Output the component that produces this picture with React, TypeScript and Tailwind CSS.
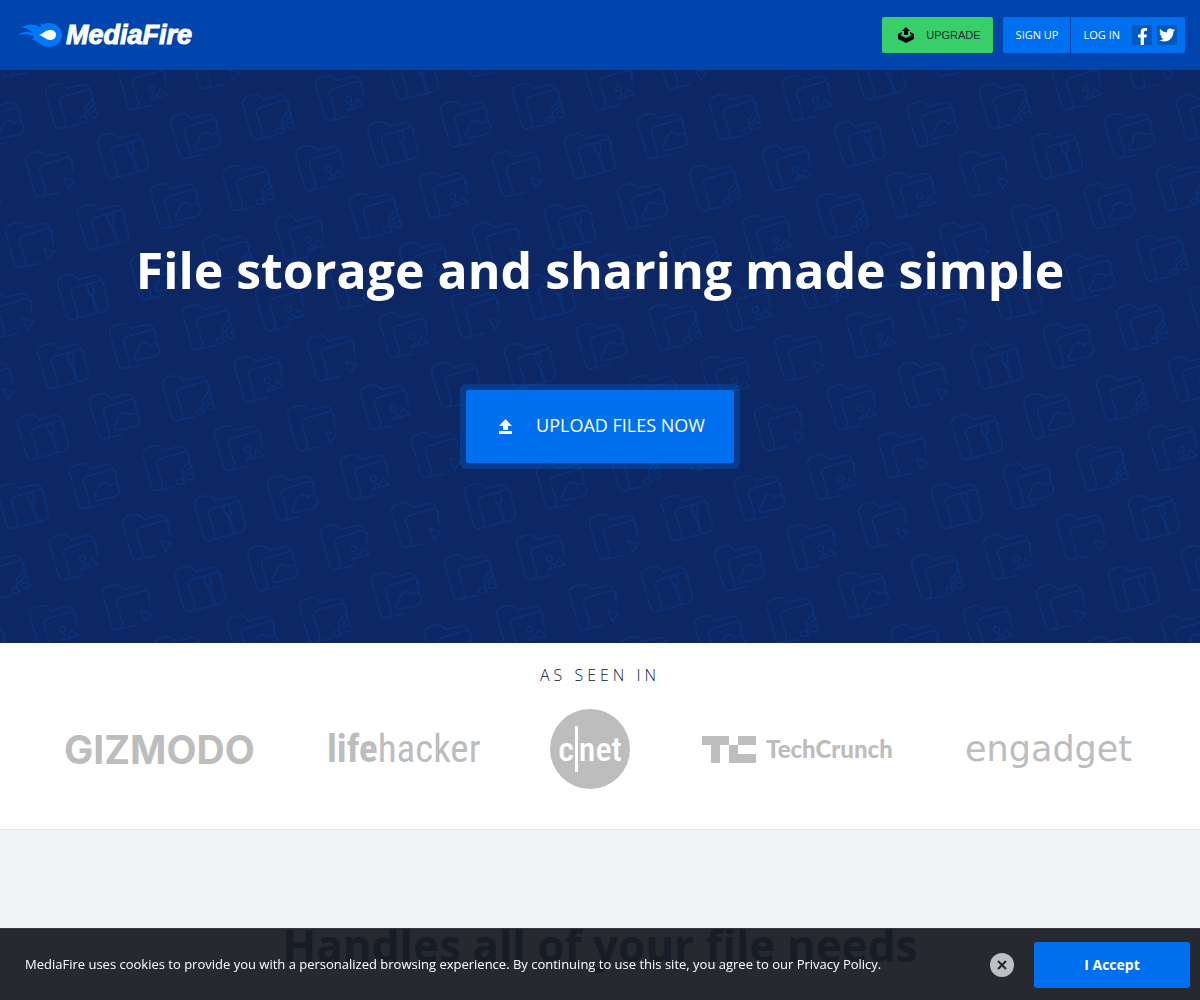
import { FaFacebookF, FaTwitter } from 'react-icons/fa'

type FolderKind = 'music' | 'image' | 'cloud' | 'zip' | 'play'

const TILE_WIDTH = 467
const TILE_HEIGHT = 640

const folders: [FolderKind, number, number][] = [
  ['cloud', 460, -39],
  ['play', 190, -27],
  ['zip', 387, -16],
  ['image', 118, -6],
  ['image', 315, 5],
  ['music', 45, 13],
  ['music', 242, 24],
  ['cloud', 440, 31],
  ['cloud', 170, 43],
  ['zip', 367, 51],
  ['zip', 97, 63],
  ['image', 295, 75],
  ['play', 25, 81],
  ['music', 222, 95],
  ['image', 419, 102],
  ['cloud', 150, 113],
  ['music', 349, 123],
  ['zip', 77, 134],
  ['image', 275, 145],
  ['play', 5, 152],
  ['music', 202, 165],
  ['image', 399, 172],
  ['cloud', 130, 184],
  ['music', 329, 193],
  ['zip', 57, 204],
  ['image', 255, 215],
  ['play', 451, 222],
  ['music', 182, 234],
  ['image', 379, 242],
  ['cloud', 109, 253],
  ['play', 307, 265],
  ['zip', 37, 273],
  ['image', 234, 286],
  ['play', 431, 292],
  ['music', 162, 305],
  ['image', 360, 314],
  ['cloud', 89, 323],
  ['play', 287, 335],
  ['zip', 17, 344],
  ['image', 214, 355],
  ['play', 411, 362],
  ['music', 142, 375],
  ['image', 340, 384],
  ['cloud', 69, 393],
  ['cloud', 267, 405],
  ['zip', 464, 413],
  ['zip', 194, 425],
  ['play', 391, 432],
  ['play', 122, 444],
  ['image', 320, 454],
  ['image', 49, 464],
  ['cloud', 247, 475],
  ['music', 444, 484],
  ['zip', 174, 496],
  ['cloud', 371, 502],
  ['play', 102, 514],
  ['music', 299, 527],
  ['image', 29, 535],
  ['cloud', 227, 545],
  ['music', 424, 554],
  ['zip', 154, 566],
]

const Folder = ({ kind }: { kind: FolderKind }) => (
  <>
    <path d="M47 15 L44 5 Q42 0 37 1 L21 5 L18 2 Q16 0 13 0 L5 2 Q0 4 0 9 L9 41 Q11 46 15 45 Q21 44 20 38 L14 18 Q14 14 18 13 L42 6 Q46 6 47 10" />
    {kind === 'zip' ? (
      <path d="M15 45 L46 37 Q51 35 51 31 L47 15" />
    ) : (
      <path d="M15 45 L33 41 M46 12 L48 21" />
    )}
    {kind === 'music' && (
      <>
        <ellipse cx="38" cy="36" rx="4" ry="3" />
        <ellipse cx="48" cy="31" rx="4" ry="3" />
        <path d="M41 35 L39 25 L47 15 L51 29 M40 30 L49 20" />
      </>
    )}
    {kind === 'image' && (
      <>
        <circle cx="33" cy="24" r="3" />
        <path d="M32 35 L36 29 L39 31 L42 24 L49 30 Z" />
      </>
    )}
    {kind === 'cloud' && (
      <path d="M27 37 Q24 36 25 33 Q26 29 28 29 Q28 21 34 19 Q39 19 41 22 Q46 17 50 24 Q51 31 45 33 Z" />
    )}
    {kind === 'zip' && (
      <path d="M29 11 L35 9 L37 18 L32 20 Z M33 21 L36 22 L34 24 L37 25 L35 27 L38 28 L36 30 L39 31 L37 33 L40 34 L38 36 L41 37" />
    )}
    {kind === 'play' && <path d="M38 26 L49 29 L43 37 Z" />}
  </>
)

const FolderPattern = () => (
  <svg className="absolute inset-0 h-full w-full" aria-hidden="true">
    <defs>
      <pattern id="folders" width={TILE_WIDTH} height={TILE_HEIGHT} patternUnits="userSpaceOnUse">
        <g fill="none" stroke="#0b3178" strokeWidth="1.4" strokeLinejoin="round" strokeLinecap="round">
          {/* second copy covers folders cut by the tile's edge */}
          {folders.map(([kind, x, y]) =>
            [x, x - TILE_WIDTH].map((left) => (
              <g key={`${left}-${y}`} transform={`translate(${left + 0.5} ${y + 0.5})`}>
                <Folder kind={kind} />
              </g>
            ))
          )}
        </g>
      </pattern>
    </defs>
    <rect width="100%" height="100%" fill="url(#folders)" />
  </svg>
)

const Flame = () => (
  <svg width="44" height="26" viewBox="0 0 44 26" aria-hidden="true">
    <path
      fill="#0077ff"
      d="M0 13 C5 9 10 9 15 11 C11 6 6 5 3 6 C8 2 16 1 22 5 C24 5 23 3 22 1 C27 4 25 1 30 1 C38 1 44 6 44 13 C44 20 38 25 31 25 C23 25 21 19 13 17 C16 17 17 16 15 14 C10 12 5 12 0 13 Z"
    />
    <path fill="#fff" d="M21 13 C25 12 27 8 32 8 C36 8 38 10 38 13 C38 16 35 18 32 18 C28 18 27 15 21 13 Z" />
  </svg>
)

const Header = () => (
  <header className="flex h-[70px] items-center justify-between bg-[#0045ad] pr-[15px] pl-[18px]">
    <a href="#" className="flex items-center gap-1">
      <Flame />
      <span className="font-['Liberation_Sans',sans-serif] text-[27px] leading-7 font-bold text-white italic [-webkit-text-stroke:1px_white]">
        MediaFire
      </span>
    </a>
    <nav className="flex h-9 gap-[10px] text-[11px] text-white">
      <a
        href="#"
        className="flex items-center gap-3 rounded-xs bg-[#38cf68] px-3 pl-4 font-['Liberation_Sans',sans-serif] text-[#1c2a35]"
      >
        <svg width="16" height="16" viewBox="0 0 16 16" fill="#000" aria-hidden="true">
          <path d="M8 0 L12 4 H10 V8 H6 V4 H4 Z" />
          <path d="M4 5 L0 7 V12 L8 16 L16 12 V7 L12 5 V7 L14 8 L8 11 L2 8 L4 7 Z" />
        </svg>
        UPGRADE
      </a>
      <div className="flex gap-px">
        <a href="#" className="flex items-center rounded-l-xs bg-[#0070f0] pr-3 pl-[13px]">
          SIGN UP
        </a>
        <div className="flex items-center gap-[5px] rounded-r-xs bg-[#0070f0] pr-2 pl-3">
          <a href="#" className="mr-[7px]">
            LOG IN
          </a>
          <a href="#" aria-label="Facebook" className="flex size-5 items-end justify-center rounded-xs bg-[#0059bf]">
            <FaFacebookF size={17} />
          </a>
          <a href="#" aria-label="Twitter" className="flex size-5 items-center justify-center rounded-xs bg-[#0059bf]">
            <FaTwitter size={16} />
          </a>
        </div>
      </div>
    </nav>
  </header>
)

const Hero = () => (
  <section className="relative bg-[#0d2764] pt-[159px] pb-[180px]">
    <FolderPattern />
    <div className="relative flex flex-col items-center gap-[79px]">
      <h1 className="text-center text-[50px] leading-[82px] font-bold text-white">
        File storage and sharing made simple
      </h1>
      <button
        type="button"
        className="flex h-[73px] items-center gap-[23px] rounded-xs bg-[#0070f0] pr-[29px] pb-0.5 pl-8 text-[18px] text-white shadow-[0_0_0_6px_#0070f044]"
      >
        <svg width="15" height="16" viewBox="0 0 15 16" fill="#fff" aria-hidden="true">
          <path d="M7.5 1 L14 8 H10 V12 H5 V8 H1 Z M1 13 H14 V16 H1 Z" />
        </svg>
        UPLOAD FILES NOW
      </button>
    </div>
  </section>
)

const Press = () => (
  <section className="border-b border-[#e3e5e8] bg-white pt-5 pb-10">
    <h2 className="text-center text-[16px] leading-6 font-light tracking-[4px] text-[#0e1a33]">AS SEEN IN</h2>
    <div className="mt-[22px] flex h-20 items-center justify-center gap-[72px] pr-[5px] leading-none whitespace-nowrap text-[#bdbdbd]">
      <span className="w-[191px] font-[Inter,sans-serif] text-[39px] font-bold">GIZMODO</span>
      <span className="w-[151px] font-['Roboto_Condensed','Liberation_Sans_Narrow','Liberation_Sans',sans-serif] text-[39px]">
        <b>life</b>hacker
      </span>
      <span className="flex size-20 items-center justify-center gap-px rounded-full bg-[#bdbdbd] font-['Roboto_Condensed','Liberation_Sans_Narrow','Liberation_Sans',sans-serif] text-[34px] font-medium text-white">
        c<span className="h-[46px] w-[3px] bg-white" />
        net
      </span>
      <span className="flex w-[191px] items-center gap-[10px] font-[Lato,sans-serif] text-[24px] font-black">
        <svg width="54" height="27" viewBox="0 0 54 27" fill="currentColor" aria-hidden="true">
          <path d="M0 0 H27 V9 H18 V27 H9 V9 H0 Z" />
          <path d="M36 0 H54 V9 H36 Z M27 9 H36 V18 H54 V27 H27 Z" />
        </svg>
        TechCrunch
      </span>
      <span className="w-[166px] font-['DejaVu_Sans',sans-serif] text-[35px]">engadget</span>
    </div>
  </section>
)

const CookieBar = () => (
  <aside className="fixed inset-x-0 bottom-0 flex h-[72px] items-center border-t border-[#34383e] bg-[#181c23]/94 pr-[10px] pl-[25px] text-white">
    <p className="flex-1 text-[13px]">
      MediaFire uses cookies to provide you with a personalized browsing experience. By continuing to use this site, you
      agree to our Privacy Policy.
    </p>
    <button
      type="button"
      aria-label="Close"
      className="mr-5 flex size-6 items-center justify-center rounded-full bg-[#bfc0c4]"
    >
      <svg width="10" height="10" viewBox="0 0 10 10" stroke="#22252d" strokeWidth="2" aria-hidden="true">
        <path d="M1 1 L9 9 M9 1 L1 9" />
      </svg>
    </button>
    <button type="button" className="h-[46px] w-[156px] rounded-[3px] bg-[#0070f0] text-[14px] font-bold">
      I Accept
    </button>
  </aside>
)

const App = () => (
  <div className="flex min-h-screen flex-col bg-[#f2f3f5] font-['Open_Sans',sans-serif]">
    <Header />
    <Hero />
    <Press />
    <section className="pt-[83px] pb-5">
      <h2 className="text-center text-[44px] leading-[64px] font-bold text-[#00246b]">Handles all of your file needs</h2>
    </section>
    <CookieBar />
  </div>
)

export default App
